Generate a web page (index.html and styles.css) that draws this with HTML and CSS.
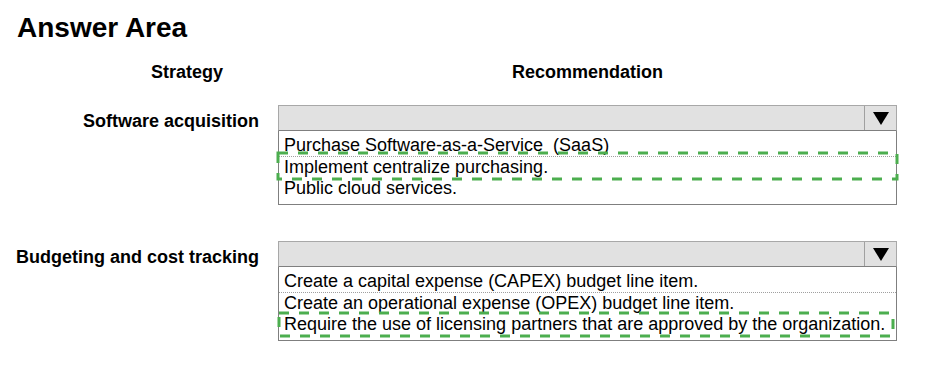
FILE: index.html
```html
<!DOCTYPE html>
<html lang="en">
<head>
    <meta charset="UTF-8">
    <meta name="viewport" content="width=device-width, initial-scale=1.0">
    <title>Answer Area</title>
    <link rel="stylesheet" href="styles.css">
</head>
<body>
    <div class="answerArea">
        <h1 class="title">Answer Area</h1>
        <div class="headRow">
            <div class="headStrategy">Strategy</div>
            <div class="headRec">Recommendation</div>
        </div>

        <div class="row">
            <div class="label">Software acquisition</div>
            <div class="dropdown">
                <div class="ddHead"><span class="ddArrow"><i></i></span></div>
                <ul class="ddList">
                    <li class="sep">Purchase Software-as-a-Service&nbsp; (SaaS)</li>
                    <li class="picked pickedOne">Implement centralize purchasing.
                        <svg class="mark"><rect width="100%" height="100%"/></svg>
                    </li>
                    <li>Public cloud services.</li>
                </ul>
            </div>
        </div>

        <div class="row rowTwo">
            <div class="label">Budgeting and cost tracking</div>
            <div class="dropdown">
                <div class="ddHead"><span class="ddArrow"><i></i></span></div>
                <ul class="ddList">
                    <li class="sep">Create a capital expense (CAPEX) budget line item.</li>
                    <li>Create an operational expense (OPEX) budget line item.</li>
                    <li class="picked pickedTwo">Require the use of licensing partners that are approved by the organization.
                        <svg class="mark"><rect width="100%" height="100%"/></svg>
                    </li>
                </ul>
            </div>
        </div>
    </div>
</body>
</html>
```

FILE: styles.css
```css
*{
    margin: 0;
    padding: 0;
    box-sizing: border-box;
}
body{
    background: #fff;
    color: #000;
    font-family: "Liberation Sans", Arial, sans-serif;
}
.answerArea{
    width: 926px;
}
.title{
    margin: 12px 0 0 17px;
    font-size: 28px;
    line-height: 32px;
    font-weight: bold;
}
.headRow,
.row{
    display: grid;
    grid-template-columns: 278px 619px;
}
.headRow{
    margin-top: 18px;
    font-size: 18px;
    line-height: 20px;
    font-weight: bold;
}
.headStrategy{
    text-align: right;
    padding-right: 55px;
}
.headRec{
    text-align: center;
}
.row{
    margin-top: 23px;
}
.rowTwo{
    margin-top: 36px;
}
.label{
    text-align: right;
    padding: 3px 19px 0 0;
    font-size: 18px;
    line-height: 26px;
    font-weight: bold;
}
.ddHead{
    height: 26px;
    display: flex;
    justify-content: flex-end;
    background: #e1e1e1;
    border: 1px solid #a8a8a8;
    border-bottom-color: #7f7f7f;
}
.ddArrow{
    width: 32px;
    border-left: 1px solid #a0a0a0;
    display: flex;
    align-items: center;
    justify-content: center;
}
.ddArrow i{
    width: 0;
    height: 0;
    border-left: 8px solid transparent;
    border-right: 8px solid transparent;
    border-top: 13px solid #000;
}
.ddList{
    list-style: none;
    border: 1px solid #7f7f7f;
    border-top: none;
    padding: 4px 0 5px;
    font-size: 18px;
    line-height: 21px;
}
.ddList li{
    padding: 0 5px;
    white-space: nowrap;
}
.ddList .sep{
    border-bottom: 1px dotted #a0a0a0;
}
.picked{
    position: relative;
}
.mark{
    position: absolute;
    overflow: visible;
    pointer-events: none;
}
.mark rect{
    fill: none;
    stroke: #4cae4f;
    stroke-width: 3;
    stroke-dasharray: 10 10;
}
.pickedOne .mark{
    top: -4px;
    left: -1px;
    width: calc(100% + 2px);
    height: calc(100% + 5px);
}
.pickedTwo .mark{
    top: -1px;
    left: 0;
    width: calc(100% - 3px);
    height: calc(100% + 2px);
}
```
